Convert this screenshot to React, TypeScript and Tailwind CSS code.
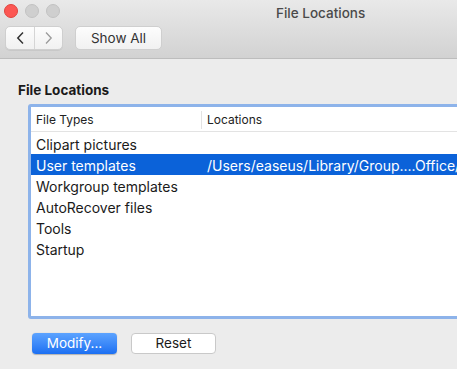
import React from 'react';

const fileTypes = [
  { name: 'Clipart pictures', location: '' },
  { name: 'User templates', location: '/Users/easeus/Library/Group....Office/User Content/Templates' },
  { name: 'Workgroup templates', location: '' },
  { name: 'AutoRecover files', location: '' },
  { name: 'Tools', location: '' },
  { name: 'Startup', location: '' },
];

const selected = 1;

export default function App() {
  return (
    <div
      className="w-[457px] h-[369px] overflow-hidden bg-[#ececec] text-[#1f1f1f]"
      style={{ fontFamily: 'Inter, "Noto Sans", sans-serif' }}
    >
      {/* Title bar */}
      <div className="h-[59px] bg-gradient-to-b from-[#e9e9e9] to-[#d2d2d2] border-b border-[#bdbdbd] relative">
        <div className="flex gap-[7px] pl-[4px] pt-[4px]">
          <span className="w-[14px] h-[14px] rounded-full bg-[#fc5753] border border-[#e0443e]" />
          <span className="w-[14px] h-[14px] rounded-full bg-[#cfcfcf] border border-[#c2c2c2]" />
          <span className="w-[14px] h-[14px] rounded-full bg-[#cfcfcf] border border-[#c2c2c2]" />
        </div>
        <div className="absolute left-[276px] top-[3px] text-[13.5px] font-medium text-[#4a4a4a]">File Locations</div>
        <div className="flex items-center gap-[12px] pl-[5px] pt-[8px]">
          <div className="flex h-[24px] w-[58px] rounded-[5px] bg-gradient-to-b from-[#fdfdfd] to-[#f1f1f1] border border-[#cfcfcf] shadow-[0_1px_0_rgba(0,0,0,0.06)]">
            <div className="w-[29px] flex items-center justify-center border-r border-[#d5d5d5]">
              <svg width="9" height="14" viewBox="0 0 9 14">
                <path d="M7 1.5 L1.8 7 L7 12.5" fill="none" stroke="#333" strokeWidth="1.5" />
              </svg>
            </div>
            <div className="flex-1 flex items-center justify-center">
              <svg width="9" height="14" viewBox="0 0 9 14">
                <path d="M2 1.5 L7.2 7 L2 12.5" fill="none" stroke="#9a9a9a" strokeWidth="1.3" />
              </svg>
            </div>
          </div>
          <div className="h-[24px] w-[87px] rounded-[5px] bg-gradient-to-b from-[#fdfdfd] to-[#f1f1f1] border border-[#cfcfcf] flex items-center justify-center text-[13.5px] text-[#333]">
            Show All
          </div>
        </div>
      </div>

      {/* Content */}
      <div className="pl-[18px] pt-[23px]">
        <div className="text-[13.5px] font-bold leading-[16px] text-[#1a1a1a]">File Locations</div>
        <div className="ml-[10px] mt-[6px] w-[480px] h-[215px] rounded-[3px] bg-white border-[3px] border-[#8db3ea] overflow-hidden">
          <div className="flex h-[25px] items-center border-b border-[#e3e3e3] text-[12px] text-[#222] pt-[2px]">
            <div className="w-[171px] shrink-0 pl-[5px] border-r border-[#e3e3e3] h-[18px] flex items-center">File Types</div>
            <div className="pl-[5px]">Locations</div>
          </div>
          <div className="pt-[1px]">
            {fileTypes.map((f, i) => (
              <div
                key={f.name}
                className={
                  'flex h-[21px] items-center text-[14px] whitespace-nowrap pt-[1px] ' +
                  (i === selected ? 'bg-[#0b62d9] text-white' : 'text-[#1a1a1a]')
                }
              >
                <div className="w-[171px] shrink-0 pl-[5px]">{f.name}</div>
                <div className="pl-[5px]">{f.location}</div>
              </div>
            ))}
          </div>
        </div>
        <div className="flex gap-[14px] ml-[14px] mt-[14px]">
          <button className="w-[85px] h-[21px] rounded-[4px] bg-gradient-to-b from-[#5ca3ff] to-[#1b6ff2] text-white text-[13.5px] flex items-center justify-center shadow-[0_0.5px_1px_rgba(0,0,0,0.25)]">
            Modify...
          </button>
          <button className="w-[85px] h-[21px] rounded-[4px] bg-white border border-[#c9c9c9] text-[#1a1a1a] text-[13.5px] flex items-center justify-center">
            Reset
          </button>
        </div>
      </div>
    </div>
  );
}
